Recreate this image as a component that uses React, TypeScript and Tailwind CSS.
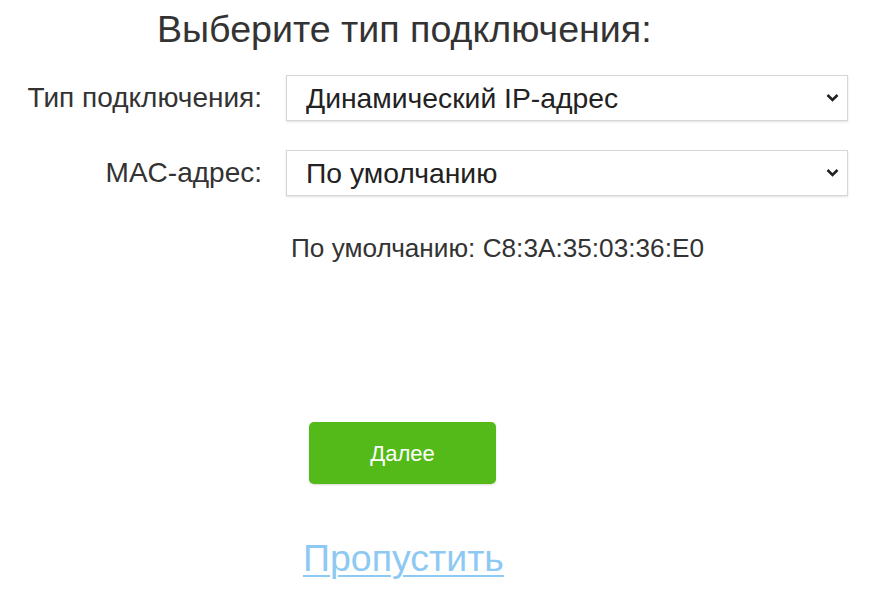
import { ChangeEvent, useState } from "react";

const font = { fontFamily: '"Liberation Sans", Arial, sans-serif' };

function Chevron() {
  return (
    <svg
      width="13"
      height="9"
      viewBox="0 0 13 9"
      className="pointer-events-none absolute right-[9px] top-1/2 -translate-y-1/2"
    >
      <path d="M1.5 1.5 L6.5 6.5 L11.5 1.5" fill="none" stroke="#222" strokeWidth="2.6" />
    </svg>
  );
}

function Field({
  label,
  value,
  options,
  onChange,
}: {
  label: string;
  value: string;
  options: string[];
  onChange: (v: string) => void;
}) {
  return (
    <div className="flex items-center">
      <div className="w-[263px] pr-[1px] text-right text-[28px] text-[#333]">{label}</div>
      <div className="relative ml-[23px] w-[562px]">
        <select
          value={value}
          onChange={(e: ChangeEvent<HTMLSelectElement>) => onChange(e.target.value)}
          className="h-[46px] w-full appearance-none border border-[#d6d6d6] bg-white pl-[19px] text-[28.3px] text-[#222] outline-none shadow-[0_1px_2px_rgba(0,0,0,0.12)]"
          style={font}
        >
          {options.map((o) => (
            <option key={o}>{o}</option>
          ))}
        </select>
        <Chevron />
      </div>
    </div>
  );
}

export default function App() {
  const [type, setType] = useState("Динамический IP-адрес");
  const [mac, setMac] = useState("По умолчанию");

  return (
    <div className="min-h-[597px] w-[889px] bg-white" style={font}>
      <div className="pl-[157px] pt-[7px] text-[37.6px] leading-[44px] text-[#333]">
        Выберите тип подключения:
      </div>

      <div className="mt-[24px] flex flex-col gap-[29px]">
        <Field
          label="Тип подключения:"
          value={type}
          onChange={setType}
          options={["Динамический IP-адрес", "Статический IP-адрес", "PPPoE", "L2TP", "PPTP"]}
        />
        <Field
          label="MAC-адрес:"
          value={mac}
          onChange={setMac}
          options={["По умолчанию", "Клонировать MAC-адрес", "Вручную"]}
        />
      </div>

      <div className="mt-[37px] pl-[291px] text-[26.2px] leading-[30px] text-[#333]">
        По умолчанию: C8:3A:35:03:36:E0
      </div>

      <div className="mt-[159px] pl-[309px]">
        <button className="h-[62px] w-[187px] rounded-[5px] bg-[#54ba19] text-[22px] text-white shadow-[0_1px_2px_rgba(0,0,0,0.15)]">
          Далее
        </button>
      </div>

      <div className="mt-[52px] pl-[303px]">
        <a href="#" className="text-[37.5px] leading-[44px] text-[#8ec9f3] underline decoration-[2px] underline-offset-[4px]">
          Пропустить
        </a>
      </div>
    </div>
  );
}
